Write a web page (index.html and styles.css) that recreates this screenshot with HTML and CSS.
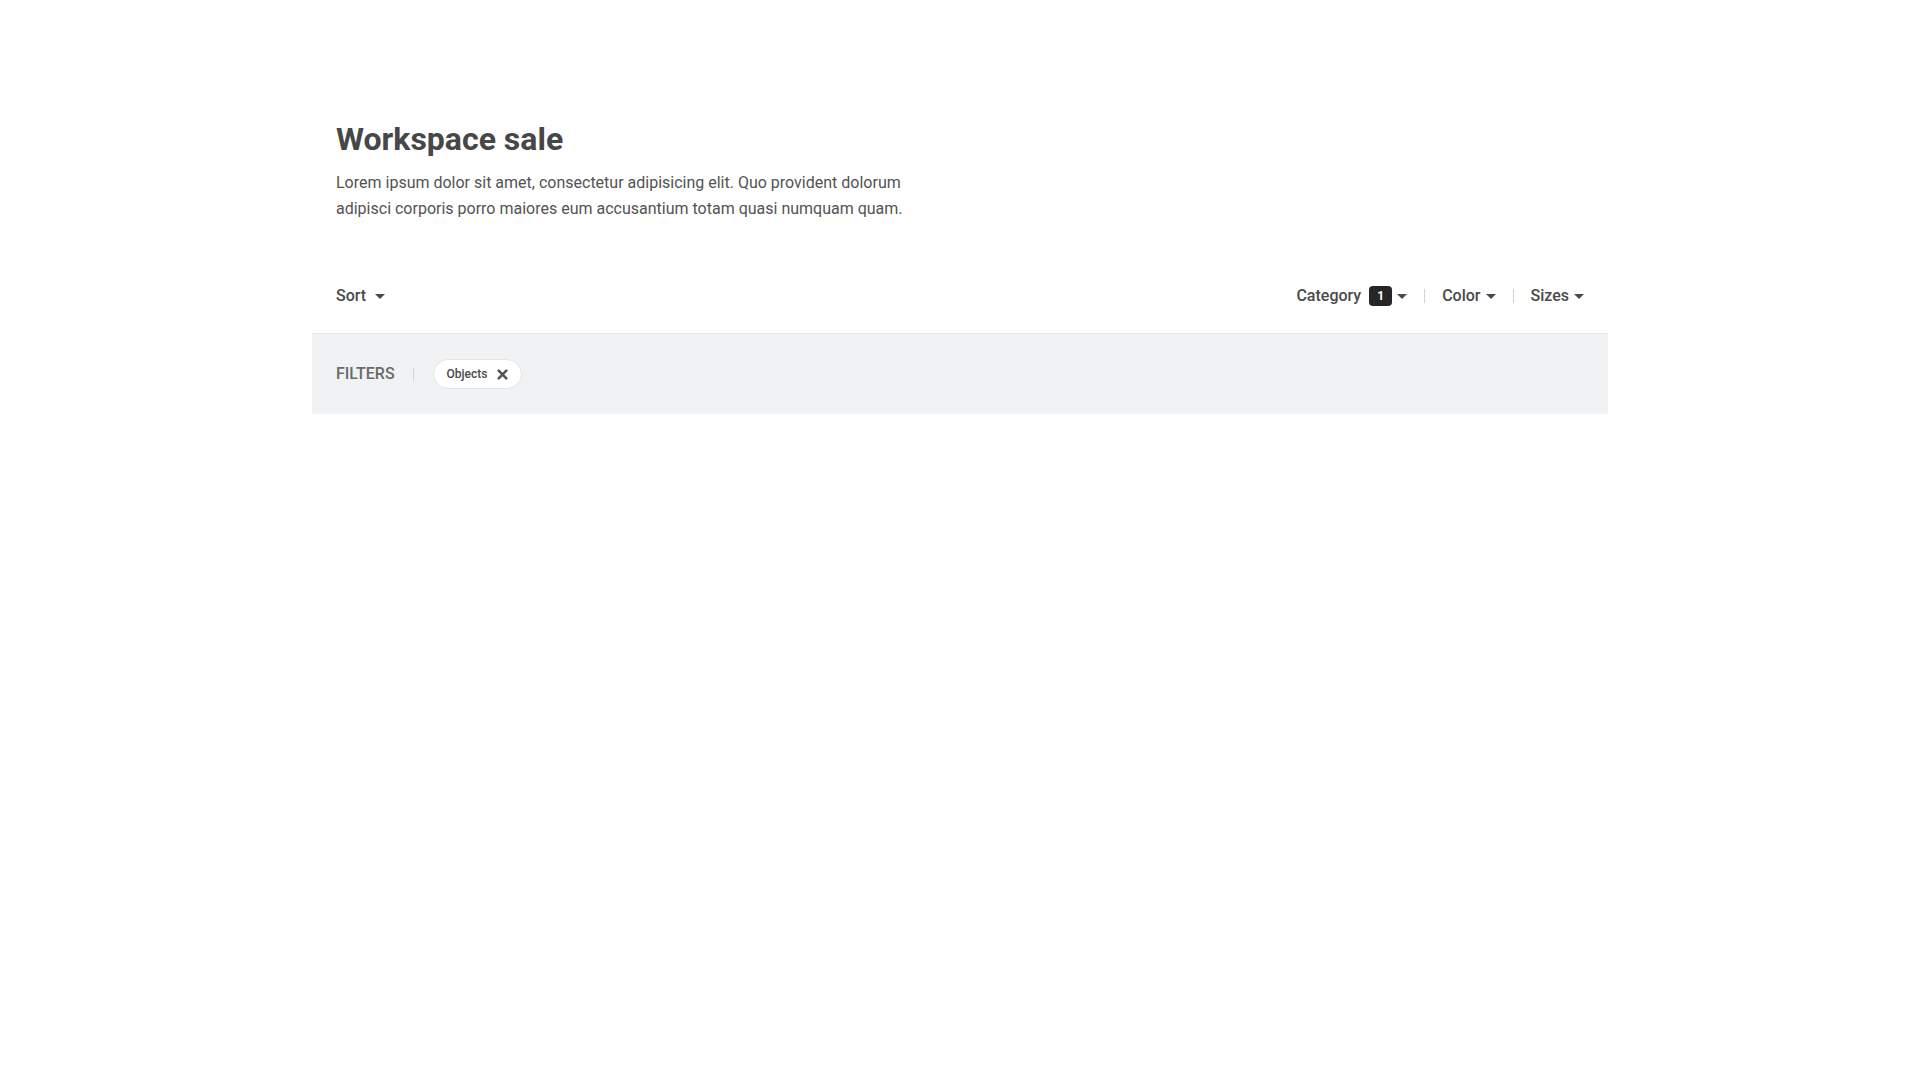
FILE: index.html
```html
<!DOCTYPE html>
<html lang="en">
<head>
<meta charset="utf-8">
<title>Workspace sale</title>
<link rel="stylesheet" href="styles.css">
</head>
<body>
<main class="container">
  <header class="intro">
    <h1 class="title">Workspace sale</h1>
    <p class="lead">Lorem ipsum dolor sit amet, consectetur adipisicing elit. Quo provident dolorum adipisci corporis porro maiores eum accusantium totam quasi numquam quam.</p>
  </header>

  <div class="toolbar">
    <button class="dd dd-sort" type="button">Sort<span class="caret caret-wide"></span></button>
    <div class="filters-menu">
      <button class="dd" type="button">Category<span class="badge">1</span><span class="caret"></span></button>
      <span class="sep"></span>
      <button class="dd" type="button">Color<span class="caret"></span></button>
      <span class="sep"></span>
      <button class="dd" type="button">Sizes<span class="caret"></span></button>
    </div>
  </div>

  <div class="active-filters">
    <span class="af-label">Filters</span>
    <span class="sep sep-af"></span>
    <span class="pill">Objects
      <svg class="pill-x" width="11" height="11" viewBox="0 0 11 11" aria-hidden="true">
        <path d="M1.7 1.7 L9.3 9.3 M9.3 1.7 L1.7 9.3" stroke="#555" stroke-width="2.6" stroke-linecap="round"/>
      </svg>
    </span>
  </div>
</main>
</body>
</html>
```

FILE: styles.css
```css
* { box-sizing: border-box; }

html, body {
  margin: 0;
  padding: 0;
  background: #ffffff;
}

body {
  font-family: Roboto, "Liberation Sans", sans-serif;
  color: #4a4a4a;
}

.container {
  width: 1296px;
  margin: 0 auto;
}

.intro {
  padding: 120px 24px 0;
}

.title {
  margin: 0;
  font-size: 32px;
  line-height: 38px;
  font-weight: 700;
  color: #474747;
}

.lead {
  margin: 12px 0 0;
  max-width: 590px;
  font-size: 16px;
  line-height: 25.6px;
  color: #535353;
}

.toolbar {
  margin-top: 46px;
  padding: 17px 24px 25px;
  display: flex;
  align-items: center;
  justify-content: space-between;
  border-bottom: 1px solid #e6e8ea;
}

.dd {
  display: inline-flex;
  align-items: center;
  padding: 0;
  border: 0;
  background: none;
  font-family: inherit;
  font-size: 16px;
  line-height: 24px;
  font-weight: 500;
  color: #4a4a4a;
  cursor: pointer;
}

.caret {
  display: inline-block;
  width: 0;
  height: 0;
  margin-left: 5px;
  border-top: 5px solid #4a4a4a;
  border-left: 5px solid transparent;
  border-right: 5px solid transparent;
}

.caret-wide { margin-left: 9px; }

.badge {
  display: inline-flex;
  align-items: center;
  justify-content: center;
  width: 23px;
  height: 20px;
  margin-left: 8px;
  border-radius: 4px;
  background: #262626;
  color: #ffffff;
  font-size: 12px;
  font-weight: 700;
  line-height: 1;
}

.filters-menu {
  display: flex;
  align-items: center;
}

.sep {
  display: inline-block;
  width: 1px;
  height: 14px;
  margin: 0 17px 0 17px;
  background: #d4d4d4;
}

.active-filters {
  height: 80px;
  padding: 0 24px;
  display: flex;
  align-items: center;
  background: #f0f2f4;
}

.af-label {
  font-size: 16px;
  line-height: 24px;
  font-weight: 500;
  text-transform: uppercase;
  color: #6a6a6a;
}

.sep-af {
  height: 13px;
  margin: 0 19px 0 18px;
}

.pill {
  display: inline-flex;
  align-items: center;
  height: 30px;
  padding: 0 13px 0 13px;
  border: 1px solid #e2e4e6;
  border-radius: 15px;
  background: #ffffff;
  font-size: 12px;
  font-weight: 500;
  color: #4a4a4a;
}

.pill-x {
  margin-left: 10px;
}
```
